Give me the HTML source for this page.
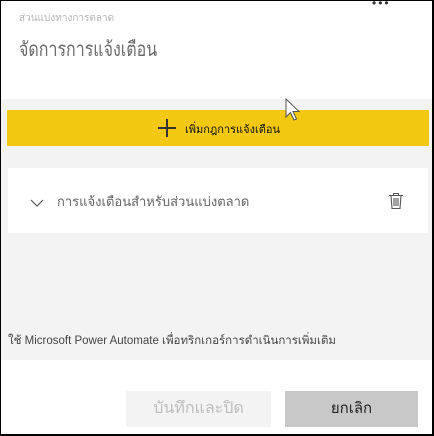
<!DOCTYPE html>
<html><head><meta charset="utf-8"><style>
*{margin:0;padding:0;box-sizing:border-box}
body{width:434px;height:436px;overflow:hidden;background:#fff;font-family:"Liberation Sans","Noto Sans CJK SC",sans-serif;position:relative}
.frame{position:absolute;left:0;top:0;width:434px;height:436px;border:1px solid #000;border-right-width:2px;border-bottom-width:2px;pointer-events:none;z-index:9}
.abs{position:absolute}
</style></head><body>
<div class="abs" style="left:372px;top:0;font-size:12px;color:#333;letter-spacing:2px;line-height:6px">•••</div>
<div class="abs" style="left:19px;top:11px;font-size:10px;color:#b5b5b5">ส่วนแบ่งทางการตลาด</div>
<div class="abs" style="left:19px;top:33px;font-size:20px;color:#6a6a6a;transform:scaleX(0.8);transform-origin:0 0;white-space:nowrap">จัดการการแจ้งเตือน</div>
<div class="abs" style="left:0;top:99px;width:434px;height:261px;background:#f3f3f3"></div>
<div class="abs" style="left:7px;top:110px;width:422px;height:36px;background:#f2c811"></div>
<div class="abs" style="left:158px;top:127px;width:18px;height:1.5px;background:#333"></div>
<div class="abs" style="left:166px;top:119px;width:1.5px;height:18px;background:#333"></div>
<div class="abs" style="left:185px;top:120px;font-size:11px;color:#111">เพิ่มกฎการแจ้งเตือน</div>
<div class="abs" style="left:8px;top:168px;width:420px;height:65px;background:#fff"></div>
<svg class="abs" style="left:30px;top:198px" width="14" height="10"><path d="M1 2 L7 8 L13 2" fill="none" stroke="#555" stroke-width="1.2"/></svg>
<div class="abs" style="left:57px;top:191px;font-size:13px;color:#666">การแจ้งเตือนสำหรับส่วนแบ่งตลาด</div>
<svg class="abs" style="left:388px;top:192px" width="16" height="18"><path d="M1 3.5H15M5.5 3.5V1.5H10.5V3.5M3 3.5L4 16.5H12L13 3.5M6 6V14M8 6V14M10 6V14" fill="none" stroke="#555" stroke-width="1.1"/></svg>
<div class="abs" style="left:8px;top:332px;font-size:11.5px;color:#444;white-space:nowrap">ใช้ Microsoft Power Automate เพื่อทริกเกอร์การดำเนินการเพิ่มเติม</div>
<div class="abs" style="left:126px;top:391px;width:145px;height:36px;background:#f3f3f3;color:#bdbdbd;font-size:16px;text-align:center;line-height:36px">บันทึกและปิด</div>
<div class="abs" style="left:285px;top:391px;width:133px;height:36px;background:#c8c8c8;color:#222;font-size:15px;text-align:center;line-height:36px">ยกเลิก</div>
<svg class="abs" style="left:285px;top:98px" width="20" height="26"><path d="M1 1V19L5.5 14.5L9 22L11.5 21L8 13.5H14Z" fill="#fff" stroke="#555" stroke-width="1"/></svg>
<div class="frame"></div>
</body></html>
